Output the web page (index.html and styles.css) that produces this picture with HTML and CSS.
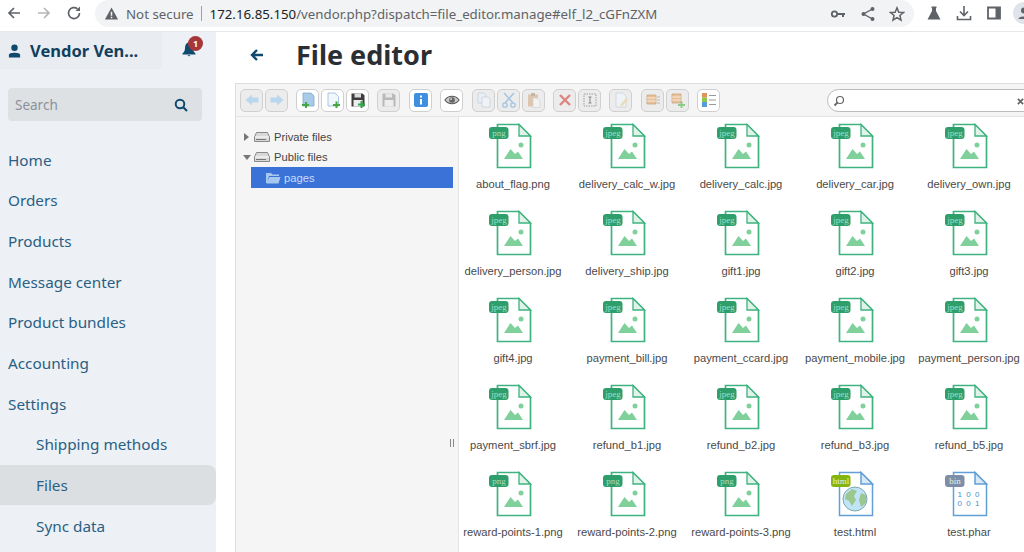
FILE: index.html
```html
<!DOCTYPE html>
<html lang="en">
<head>
<meta charset="utf-8">
<title>File editor</title>
<link rel="stylesheet" href="styles.css">
</head>
<body>
<svg class="defs" width="0" height="0" aria-hidden="true">
  <symbol id="img-file" viewBox="0 0 48 46">
    <path d="M8.500 1.500H30L41.500 13V44.500H8.500Z" fill="#fff" stroke="#3fb27f" stroke-width="1.700"/>
    <path d="M30 1.500V13H41.500Z" fill="#dff3e8" stroke="#3fb27f" stroke-width="1.300"/>
    <circle cx="32" cy="22" r="2.500" fill="#7fd09b"/>
    <path d="M15 36L21.500 26L26 31L29 28.500L34 36Z" fill="#7fd09b"/>
    <rect y="4" width="19.500" height="12" rx="3" fill="#2e9e6b"/>
  </symbol>
  <symbol id="html-file" viewBox="0 0 48 46">
    <path d="M8.500 1.500H30L41.500 13V44.500H8.500Z" fill="#fff" stroke="#619fd6" stroke-width="1.500"/>
    <path d="M30 1.500V13H41.500Z" fill="#d8e8f6" stroke="#619fd6" stroke-width="1.500"/>
    <circle cx="24" cy="28" r="12" fill="#bfe3f7" stroke="#7fa8a8"/>
    <path d="M15 23L21 18L26 20L23 25L25 29L21 35L18 30L14 28ZM30 22L35 24L35 32L30 36L28 29Z" fill="#9cc890"/>
    <rect y="4" width="19.500" height="12" rx="3" fill="#84b50f"/>
  </symbol>
  <symbol id="bin-file" viewBox="0 0 48 46">
    <path d="M8.500 1.500H30L41.500 13V44.500H8.500Z" fill="#fff" stroke="#619fd6" stroke-width="1.500"/>
    <path d="M30 1.500V13H41.500Z" fill="#d8e8f6" stroke="#619fd6" stroke-width="1.500"/>
    <rect y="4" width="19.500" height="12" rx="3" fill="#7d8fa8"/>
  </symbol>
  <symbol id="drive" viewBox="0 0 16 10">
    <path d="M2.500 .5H13.500L15.500 5V9.500H.5V5Z" fill="#d8d8d8" stroke="#8a8a8a"/>
    <path d="M1 5H15" stroke="#fff"/>
    <path d="M2 7.500H12" stroke="#777"/>
  </symbol>
</svg>

<header class="browser">
  <div class="nav-icons">
    <svg class="ci" viewBox="0 0 16 16"><path d="M14 8H3M8 3L3 8L8 13" fill="none" stroke="#5f6368" stroke-width="1.700"/></svg>
    <svg class="ci" viewBox="0 0 16 16"><path d="M2 8H13M8 3L13 8L8 13" fill="none" stroke="#b4b6b9" stroke-width="1.700"/></svg>
    <svg class="ci" viewBox="0 0 16 16"><path d="M13.500 8A5.500 5.500 0 1 1 11.500 3.800" fill="none" stroke="#5f6368" stroke-width="1.700"/><path d="M9.500 6H14V1.500Z" fill="#5f6368"/></svg>
  </div>
  <div class="address">
    <svg class="warn" viewBox="0 0 16 16"><path d="M8 1.500L15 14.500H1ZM7.200 6V10.500H8.800V6ZM7.200 11.500V13H8.800V11.500Z" fill="#5f6368" fill-rule="evenodd"/></svg>
    <span class="secure">Not secure</span>
    <span class="sep"></span>
    <span class="url"><b class="host">172.16.85.150</b>/vendor.php?dispatch=file_editor.manage#elf_l2_cGFnZXM</span>
    <svg class="ci key" viewBox="0 0 16 16"><circle cx="4.500" cy="8" r="2.700" fill="none" stroke="#5f6368" stroke-width="1.800"/><path d="M7 7H15V9H14V11H12V9H7Z" fill="#5f6368"/></svg>
    <svg class="ci share" viewBox="0 0 16 16"><path d="M12.500 3L3.500 8L12.500 13" fill="none" stroke="#5f6368" stroke-width="1.400"/><circle cx="12.500" cy="3" r="2" fill="#5f6368"/><circle cx="3.500" cy="8" r="2" fill="#5f6368"/><circle cx="12.500" cy="13" r="2" fill="#5f6368"/></svg>
    <svg class="ci star" viewBox="0 0 16 16"><path d="M8 1.800L9.800 6.200L14.500 6.500L10.900 9.500L12 14.200L8 11.700L4 14.200L5.100 9.500L1.500 6.500L6.200 6.200Z" fill="none" stroke="#5f6368" stroke-width="1.500"/></svg>
  </div>
  <div class="ext-icons">
    <svg class="ci" viewBox="0 0 16 16"><path d="M5.500 1.500H10.500V3H10V6L14.500 14.500H1.500L6 6V3H5.500Z" fill="#5f6368"/></svg>
    <svg class="ci" viewBox="0 0 16 16"><path d="M8 1V10M4 6.500L8 10.500L12 6.500M1.500 11V14.500H14.500V11" fill="none" stroke="#5f6368" stroke-width="1.600"/></svg>
    <svg class="ci" viewBox="0 0 16 16"><path d="M2 2.500H14V13.500H2Z" fill="none" stroke="#5f6368" stroke-width="1.800"/><path d="M9.500 2.500H14V13.500H9.500Z" fill="#5f6368"/></svg>
    <span class="avatar"><svg viewBox="0 0 16 16"><circle cx="8" cy="5.500" r="3" fill="#5f6368"/><path d="M2.500 14C2.500 10.500 13.500 10.500 13.500 14Z" fill="#5f6368"/></svg></span>
  </div>
</header>

<div class="app">
  <aside class="sidebar">
    <div class="side-top">
      <div class="user">
        <svg class="user-ico" viewBox="0 0 12 13"><circle cx="6" cy="3.500" r="3" fill="#0f4a6e"/><path d="M.8 12.500V10C.8 7.500 11.200 7.500 11.200 10V12.500Z" fill="#0f4a6e"/></svg>
        <span class="user-name">Vendor Ven...</span>
      </div>
      <div class="bell">
        <svg class="bell-ico" viewBox="0 0 14 15"><path d="M7 0C4 1 3 3 3 6C3 9 2 10 .5 11.500V12.500H13.500V11.500C12 10 11 9 11 6C11 3 10 1 7 0ZM5.500 13.200A1.600 1.600 0 0 0 8.500 13.200Z" fill="#0f4a6e"/></svg>
        <span class="badge">1</span>
      </div>
    </div>
    <div class="search">
      <span class="search-text">Search</span>
      <svg class="search-ico" viewBox="0 0 14 14"><circle cx="6" cy="6" r="4.300" fill="none" stroke="#0f4a6e" stroke-width="2"/><path d="M9 9L13 13" stroke="#0f4a6e" stroke-width="2.200"/></svg>
    </div>
    <nav class="menu">
      <a class="item">Home</a>
      <a class="item">Orders</a>
      <a class="item">Products</a>
      <a class="item">Message center</a>
      <a class="item">Product bundles</a>
      <a class="item">Accounting</a>
      <a class="item">Settings</a>
      <a class="item sub">Shipping methods</a>
      <a class="item sub active">Files</a>
      <a class="item sub">Sync data</a>
    </nav>
  </aside>

  <main class="main">
    <div class="title-row">
      <svg class="back" viewBox="0 0 14 12"><path d="M13 6H3M7 1L2 6L7 11" fill="none" stroke="#0f4a6e" stroke-width="2.400"/></svg>
      <h1 class="title">File editor</h1>
    </div>
    <section class="elfinder">
      <div class="toolbar">
        <div class="group">
          <span class="btn off"><svg viewBox="0 0 16 16"><path d="M8 2.500L1.500 8L8 13.500V10.500H14.500V5.500H8Z" fill="#a9d0ee"/></svg></span>
          <span class="btn off"><svg viewBox="0 0 16 16"><path d="M8 2.500L14.500 8L8 13.500V10.500H1.500V5.500H8Z" fill="#a9d0ee"/></svg></span>
        </div>
        <div class="group">
          <span class="btn"><svg viewBox="0 0 16 16"><path d="M3 1H11L14 4V14H3Z" fill="#a9cbe8" stroke="#7fa8cc" stroke-width=".8"/><path d="M2 12H5V10H7V12H9V14H7V16H5V14H2Z" fill="#45a845"/></svg></span>
          <span class="btn"><svg viewBox="0 0 16 16"><path d="M3 1H10L13.500 4.500V14H3Z" fill="#f2f7fb" stroke="#9dbfdc" stroke-width=".9"/><path d="M8 12H10.500V9.500H12.500V12H15V14H12.500V16H10.500V14H8Z" fill="#45a845"/></svg></span>
          <span class="btn"><svg viewBox="0 0 16 16"><path d="M1.500 1.500H12.500L14.500 3.500V14.500H1.500Z" fill="#3d3d3d"/><path d="M4.500 1.500H11V5.500H4.500Z" fill="#ddd"/><path d="M3.500 8H12.500V14.500H3.500Z" fill="#eee"/><path d="M8 11.500H10.500V9H12.500V11.500H15V13.500H12.500V16H10.500V13.500H8Z" fill="#2da84a"/></svg></span>
        </div>
        <div class="group wide">
          <span class="btn off"><svg viewBox="0 0 16 16"><path d="M1.500 1.500H12.500L14.500 3.500V14.500H1.500Z" fill="#a8a8a8"/><path d="M4.500 1.500H11V5.500H4.500Z" fill="#e6e6e6"/><path d="M3.500 8H12.500V14.500H3.500Z" fill="#eee"/></svg></span>
        </div>
        <div class="group">
          <span class="btn"><svg viewBox="0 0 16 16"><rect x="1" y="1" width="14" height="14" rx="2" fill="#3f8fe0"/><path d="M7 3.500H9V5.500H7ZM7 7H9V12.500H7Z" fill="#fff"/></svg></span>
        </div>
        <div class="group wide">
          <span class="btn"><svg viewBox="0 0 18 16"><path d="M1 8C5 2.500 13 2.500 17 8C13 13.500 5 13.500 1 8Z" fill="#ccc" stroke="#555" stroke-width="1.200"/><circle cx="9" cy="8" r="3.200" fill="#666"/><circle cx="8" cy="7" r="1" fill="#eee"/></svg></span>
        </div>
        <div class="group">
          <span class="btn off"><svg viewBox="0 0 16 16"><path d="M2 1H8L10 3V11H2Z" fill="#e8eff6" stroke="#b7c9da" stroke-width=".8"/><path d="M6 5H12L14 7V15H6Z" fill="#f2f6fa" stroke="#b7c9da" stroke-width=".8"/></svg></span>
          <span class="btn off"><svg viewBox="0 0 16 16"><path d="M3 1L12 11M13 1L4 11" stroke="#8fb8dc" stroke-width="1.500"/><circle cx="4" cy="13" r="2.200" fill="none" stroke="#8fb8dc" stroke-width="1.300"/><circle cx="12" cy="13" r="2.200" fill="none" stroke="#8fb8dc" stroke-width="1.300"/></svg></span>
          <span class="btn off"><svg viewBox="0 0 16 16"><path d="M2 2.500H12V14.500H2Z" fill="#d9b99a"/><path d="M5 1H9V4H5Z" fill="#b9a48e"/><path d="M7 6H11L14 9V15.500H7Z" fill="#f4f4f4" stroke="#c8c8c8" stroke-width=".7"/></svg></span>
        </div>
        <div class="group">
          <span class="btn off"><svg viewBox="0 0 16 16"><path d="M3 3L13 13M13 3L3 13" stroke="#d9645c" stroke-width="2.400"/></svg></span>
          <span class="btn off"><svg viewBox="0 0 16 16"><path d="M2 2H14V14H2Z" fill="none" stroke="#888" stroke-dasharray="1.500 1"/><path d="M6.500 5H9.500M8 5V11M6.500 11H9.500" stroke="#666"/></svg></span>
        </div>
        <div class="group wide">
          <span class="btn off"><svg viewBox="0 0 16 16"><path d="M3 1H10L13 4V15H3Z" fill="#f2f6fa" stroke="#bccbd8" stroke-width=".8"/><path d="M7 13L13 6L15 8L9 14.500Z" fill="#e8d7a8"/></svg></span>
        </div>
        <div class="group">
          <span class="btn off"><svg viewBox="0 0 16 16"><path d="M2 3H11V12H2Z" fill="#e8b27c" stroke="#b98a5a" stroke-width=".7"/><path d="M2 6H11M2 9H11" stroke="#fff" stroke-width=".7"/><path d="M12 5H15M12 8H15M12 11H15" stroke="#aaa"/></svg></span>
          <span class="btn off"><svg viewBox="0 0 16 16"><path d="M2 2H11V11H2Z" fill="#e8b27c" stroke="#b98a5a" stroke-width=".7"/><path d="M2 5H11M2 8H11" stroke="#fff" stroke-width=".7"/><path d="M8 12H10.500V9.500H12.500V12H15V14H12.500V16H10.500V14H8Z" fill="#6cc06c"/></svg></span>
        </div>
        <div class="group">
          <span class="btn"><svg viewBox="0 0 16 16"><rect x="1" y="1" width="5" height="4.500" fill="#e0935a"/><rect x="1" y="5.500" width="5" height="4.500" fill="#8ec64e"/><rect x="1" y="10" width="5" height="5" fill="#5a9bdc"/><path d="M8 3.500H15M8 8H15M8 12.500H15" stroke="#999"/></svg></span>
        </div>
        <div class="find">
          <svg class="find-ico" viewBox="0 0 12 12"><circle cx="7" cy="5" r="3.500" fill="none" stroke="#666" stroke-width="1.200"/><path d="M4.500 7.500L1.500 10.500" stroke="#666" stroke-width="1.800"/></svg>
          <svg class="find-x" viewBox="0 0 8 8"><path d="M1 1L7 7M7 1L1 7" stroke="#666" stroke-width="2"/></svg>
        </div>
      </div>
      <div class="panes">
        <div class="tree">
          <div class="tree-row"><i class="arrow right"></i><svg class="drive"><use href="#drive"/></svg><span>Private files</span></div>
          <div class="tree-row"><i class="arrow down"></i><svg class="drive"><use href="#drive"/></svg><span>Public files</span></div>
          <div class="tree-row selected">
            <svg class="folder" viewBox="0 0 16 12"><path d="M1 1H6L7.500 2.500H14V4H4L2 11H1ZM4.500 5H15.500L13.500 11.500H1.500Z" fill="#a6c8ee"/></svg>
            <span>pages</span>
          </div>
          <span class="handle"></span>
        </div>
        <div class="files">
          <figure class="file"><svg class="ficon"><use href="#img-file"/><text class="tag" x="10" y="13">png</text></svg><figcaption>about_flag.png</figcaption></figure>
          <figure class="file"><svg class="ficon"><use href="#img-file"/><text class="tag" x="10" y="13">jpeg</text></svg><figcaption>delivery_calc_w.jpg</figcaption></figure>
          <figure class="file"><svg class="ficon"><use href="#img-file"/><text class="tag" x="10" y="13">jpeg</text></svg><figcaption>delivery_calc.jpg</figcaption></figure>
          <figure class="file"><svg class="ficon"><use href="#img-file"/><text class="tag" x="10" y="13">jpeg</text></svg><figcaption>delivery_car.jpg</figcaption></figure>
          <figure class="file"><svg class="ficon"><use href="#img-file"/><text class="tag" x="10" y="13">jpeg</text></svg><figcaption>delivery_own.jpg</figcaption></figure>
          <figure class="file"><svg class="ficon"><use href="#img-file"/><text class="tag" x="10" y="13">jpeg</text></svg><figcaption>delivery_person.jpg</figcaption></figure>
          <figure class="file"><svg class="ficon"><use href="#img-file"/><text class="tag" x="10" y="13">jpeg</text></svg><figcaption>delivery_ship.jpg</figcaption></figure>
          <figure class="file"><svg class="ficon"><use href="#img-file"/><text class="tag" x="10" y="13">jpeg</text></svg><figcaption>gift1.jpg</figcaption></figure>
          <figure class="file"><svg class="ficon"><use href="#img-file"/><text class="tag" x="10" y="13">jpeg</text></svg><figcaption>gift2.jpg</figcaption></figure>
          <figure class="file"><svg class="ficon"><use href="#img-file"/><text class="tag" x="10" y="13">jpeg</text></svg><figcaption>gift3.jpg</figcaption></figure>
          <figure class="file"><svg class="ficon"><use href="#img-file"/><text class="tag" x="10" y="13">jpeg</text></svg><figcaption>gift4.jpg</figcaption></figure>
          <figure class="file"><svg class="ficon"><use href="#img-file"/><text class="tag" x="10" y="13">jpeg</text></svg><figcaption>payment_bill.jpg</figcaption></figure>
          <figure class="file"><svg class="ficon"><use href="#img-file"/><text class="tag" x="10" y="13">jpeg</text></svg><figcaption>payment_ccard.jpg</figcaption></figure>
          <figure class="file"><svg class="ficon"><use href="#img-file"/><text class="tag" x="10" y="13">jpeg</text></svg><figcaption>payment_mobile.jpg</figcaption></figure>
          <figure class="file"><svg class="ficon"><use href="#img-file"/><text class="tag" x="10" y="13">jpeg</text></svg><figcaption>payment_person.jpg</figcaption></figure>
          <figure class="file"><svg class="ficon"><use href="#img-file"/><text class="tag" x="10" y="13">jpeg</text></svg><figcaption>payment_sbrf.jpg</figcaption></figure>
          <figure class="file"><svg class="ficon"><use href="#img-file"/><text class="tag" x="10" y="13">jpeg</text></svg><figcaption>refund_b1.jpg</figcaption></figure>
          <figure class="file"><svg class="ficon"><use href="#img-file"/><text class="tag" x="10" y="13">jpeg</text></svg><figcaption>refund_b2.jpg</figcaption></figure>
          <figure class="file"><svg class="ficon"><use href="#img-file"/><text class="tag" x="10" y="13">jpeg</text></svg><figcaption>refund_b3.jpg</figcaption></figure>
          <figure class="file"><svg class="ficon"><use href="#img-file"/><text class="tag" x="10" y="13">jpeg</text></svg><figcaption>refund_b5.jpg</figcaption></figure>
          <figure class="file"><svg class="ficon"><use href="#img-file"/><text class="tag" x="10" y="13">png</text></svg><figcaption>reward-points-1.png</figcaption></figure>
          <figure class="file"><svg class="ficon"><use href="#img-file"/><text class="tag" x="10" y="13">png</text></svg><figcaption>reward-points-2.png</figcaption></figure>
          <figure class="file"><svg class="ficon"><use href="#img-file"/><text class="tag" x="10" y="13">png</text></svg><figcaption>reward-points-3.png</figcaption></figure>
          <figure class="file"><svg class="ficon"><use href="#html-file"/><text class="tag bright" x="10" y="13">html</text></svg><figcaption>test.html</figcaption></figure>
          <figure class="file"><svg class="ficon"><use href="#bin-file"/><text class="tag bright" x="10" y="13">bin</text><text class="bits" x="24" y="26">1 0 0</text><text class="bits" x="24" y="35">0 0 1</text></svg><figcaption>test.phar</figcaption></figure>
        </div>
      </div>
    </section>
  </main>
</div>
</body>
</html>
```
FILE: styles.css
```css
* { box-sizing: border-box; }
html, body { margin: 0; height: 100%; overflow: hidden; background: #fff; }
body { display: flex; flex-direction: column; width: 1024px; height: 552px; font-family: "Noto Sans", sans-serif; }
.defs { position: absolute; }

.browser { flex: none; height: 32px; display: flex; padding-bottom: 4px; border-bottom: 1px solid #e6e8ea; background: #fff; }
.nav-icons { display: flex; flex: none; width: 95px; padding: 5px 0 0 6px; gap: 14px; }
.ci { width: 16px; height: 16px; flex: none; }
.address { flex: none; width: 819px; height: 27px; background: #f1f3f4; border-radius: 14px; display: flex; align-items: center; padding-left: 9px; font-size: 13.300px; color: #5f6368; }
.warn { width: 15px; height: 15px; flex: none; }
.secure { margin-left: 7px; white-space: nowrap; }
.sep { width: 1px; height: 15px; flex: none; background: #9aa0a6; margin: 0 8px 0 7px; }
.url { flex: 1; white-space: nowrap; font-size: 13.270px; }
.host { font-weight: 400; color: #202124; }
.key { margin-right: 14px; }
.share { margin-right: 13px; }
.star { margin-right: 9px; }
.ext-icons { display: flex; flex: none; gap: 14px; padding: 5px 0 0 12px; }
.avatar { width: 22px; height: 22px; margin: -3px 0 0 -3px; background: #dfe3ea; border-radius: 50%; padding: 3px; flex: none; }
.avatar svg { display: block; }

.app { flex: 1; display: flex; min-height: 0; }
.sidebar { width: 216px; flex: none; background: #edf0f4; }
.side-top { display: flex; height: 37px; }
.user { width: 162px; background: #e9edf1; border-radius: 0 0 4px 0; display: flex; align-items: center; padding-left: 8px; gap: 9px; }
.user-ico { width: 13px; height: 14px; flex: none; }
.user-name { font-size: 16.500px; font-weight: 700; color: #123f5e; white-space: nowrap; }
.bell { position: relative; margin-left: 20px; padding-top: 10px; }
.bell-ico { display: block; width: 14px; height: 15px; }
.badge { position: absolute; left: 6px; top: 4px; width: 15px; height: 15px; border-radius: 50%; background: #a5373a; color: #fff; font-size: 9px; font-weight: 700; line-height: 15px; text-align: center; }
.search { height: 33px; margin: 19px 14px 18.300px 8px; background: #dee1e4; border-radius: 4px; display: flex; align-items: center; justify-content: space-between; padding: 0 14px 0 7px; }
.search-text { font-size: 13.500px; color: #8a9299; }
.search-ico { width: 14px; height: 14px; }
.menu { display: flex; flex-direction: column; }
.item { height: 40.700px; display: flex; align-items: center; padding-left: 8px; font-size: 15.300px; color: #2a5f85; border-radius: 0 8px 8px 0; }
.sub { padding-left: 36px; }
.active { background: #dcdfe2; }

.main { flex: 1; min-width: 0; display: flex; flex-direction: column; overflow: hidden; background: #fff; }
.title-row { flex: none; height: 51px; display: flex; align-items: center; padding: 0 0 6px 34px; }
.back { width: 14px; height: 12px; flex: none; }
.title { margin: 0 0 0 32px; font-size: 27px; font-weight: 700; color: #2b2f33; }
.elfinder { flex: 1; min-height: 0; margin-left: 19px; border-left: 1px solid #ddd; border-top: 1px solid #ddd; display: flex; flex-direction: column; font-family: "Liberation Sans", Arial, sans-serif; font-size: 11.200px; color: #444; }
.toolbar { flex: none; height: 33px; background: #f5f5f5; border-bottom: 1px solid #e4e4e4; display: flex; align-items: center; padding-left: 4px; }
.group { display: flex; gap: 2px; margin-right: 8px; flex: none; }
.wide { margin-right: 9px; }
.btn { width: 23px; height: 23px; flex: none; border: 1px solid #cfcfcf; border-radius: 5px; background: #fff; display: flex; align-items: center; justify-content: center; }
.btn svg { width: 16px; height: 16px; }
.off { background: #ececec; }
.off svg { opacity: .75; }
.find { position: relative; flex: none; width: 210px; height: 23px; margin-left: 99px; background: #fff; border: 1px solid #bbb; border-radius: 12px; }
.find-ico { position: absolute; left: 5px; top: 5px; width: 12px; height: 12px; }
.find-x { position: absolute; left: 189px; top: 8px; width: 7px; height: 7px; }
.panes { flex: 1; min-height: 0; display: flex; }
.tree { position: relative; width: 223px; flex: none; background: #f5f5f5; border-right: 1px solid #e4e4e4; padding-top: 10px; }
.tree-row { height: 20px; display: flex; align-items: center; padding-left: 8px; white-space: nowrap; }
.arrow { width: 0; height: 0; border-style: solid; border-color: transparent; margin-right: 5px; flex: none; }
.right { border-width: 4px 0 4px 5px; border-left-color: #777; }
.down { border-width: 5px 4px 0; border-top-color: #777; margin-left: -1px; margin-right: 3px; }
.drive { width: 16px; height: 10px; margin-right: 4px; flex: none; }
.selected { height: 21px; margin: 0 5px 0 15px; padding-left: 14px; background: #3a72d8; color: #c9dbf6; }
.folder { width: 16px; height: 12px; margin-right: 3px; flex: none; }
.handle { position: absolute; left: 214px; top: 322px; width: 4px; height: 8px; border-left: 1px solid #888; border-right: 1px solid #888; }
.files { flex: none; width: 600px; padding-top: 6px; display: grid; grid-template-columns: repeat(5, 108px); column-gap: 6px; grid-auto-rows: 87px; align-content: start; background: #fff; }
.file { margin: 0; display: flex; flex-direction: column; align-items: center; }
.ficon { width: 48px; height: 46px; flex: none; }
.file figcaption { margin-top: 8px; font-size: 11.200px; line-height: 14px; color: #4a4a4a; white-space: nowrap; }
.tag { font-family: "Liberation Serif", serif; font-size: 9px; fill: #a8dcc0; text-anchor: middle; }
.bright { fill: #e8f0e0; }
.bits { font-family: "Liberation Sans", sans-serif; font-size: 8px; letter-spacing: 1px; fill: #4a90d0; text-anchor: middle; }
```
